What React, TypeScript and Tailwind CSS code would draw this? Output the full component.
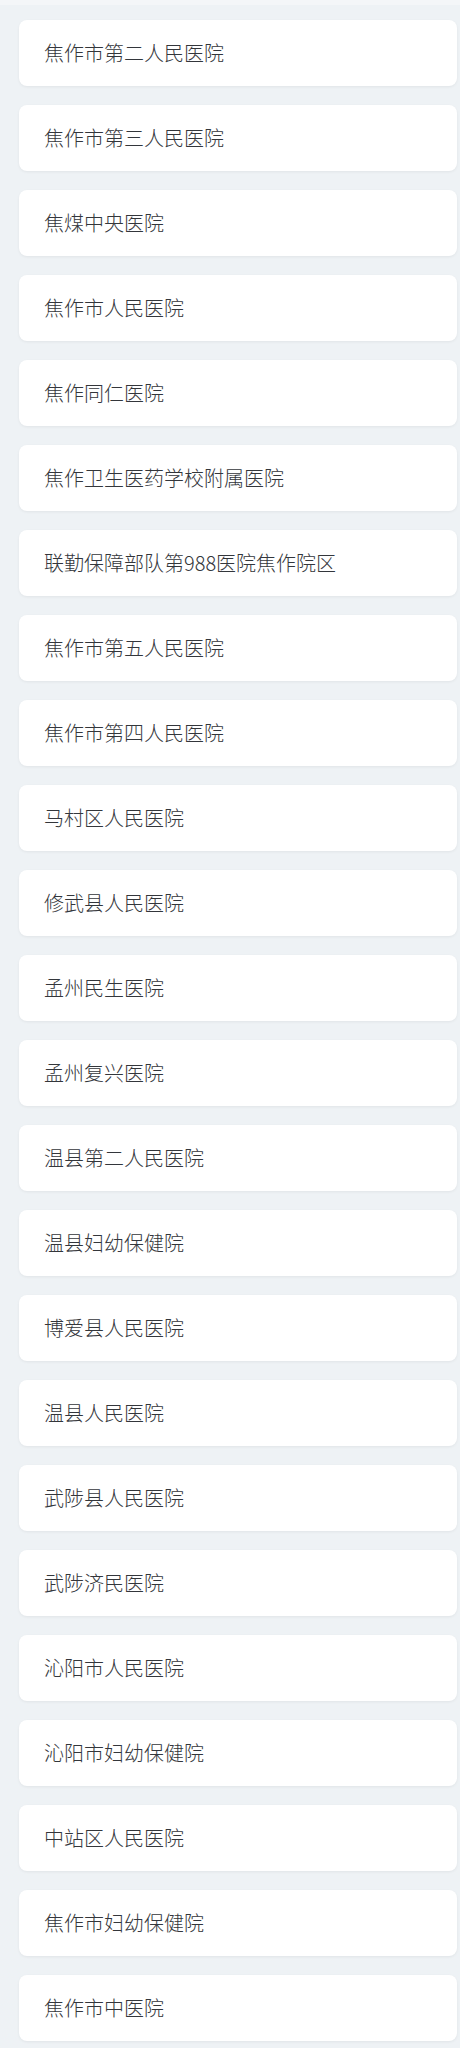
import React from "react";

const hospitals = [
  "焦作市第二人民医院",
  "焦作市第三人民医院",
  "焦煤中央医院",
  "焦作市人民医院",
  "焦作同仁医院",
  "焦作卫生医药学校附属医院",
  "联勤保障部队第988医院焦作院区",
  "焦作市第五人民医院",
  "焦作市第四人民医院",
  "马村区人民医院",
  "修武县人民医院",
  "孟州民生医院",
  "孟州复兴医院",
  "温县第二人民医院",
  "温县妇幼保健院",
  "博爱县人民医院",
  "温县人民医院",
  "武陟县人民医院",
  "武陟济民医院",
  "沁阳市人民医院",
  "沁阳市妇幼保健院",
  "中站区人民医院",
  "焦作市妇幼保健院",
  "焦作市中医院",
];

const App: React.FC = () => {
  return (
    <div
      className="min-h-[2048px] bg-[#eef2f5] border-t-[5px] border-[#f4f6f8] pt-[15px] pb-6"
      style={{ fontFamily: '"Noto Sans CJK SC", "Noto Sans", sans-serif' }}
    >
      <ul className="flex flex-col gap-[19px] ml-[19px] mr-[3px]">
        {hospitals.map((name) => (
          <li
            key={name}
            className="h-[66px] flex items-center pl-[25px] bg-white rounded-lg shadow-[0_1px_3px_rgba(0,0,0,0.06)] text-[20px] font-light text-[#33363b]"
          >
            {name}
          </li>
        ))}
      </ul>
    </div>
  );
};

export default App;
